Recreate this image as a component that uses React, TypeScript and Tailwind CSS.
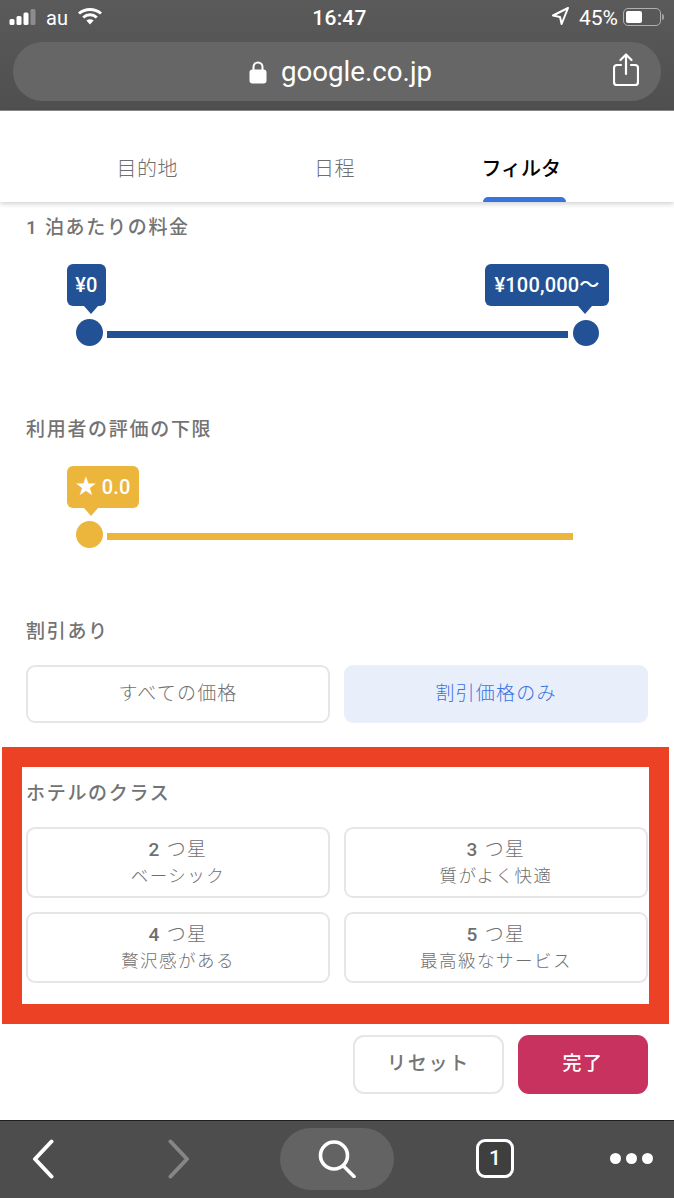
import React from "react";

const jp = "font-['Roboto','Noto_Sans_CJK_JP',sans-serif]";

function Label({ children, className = "" }: { children: React.ReactNode; className?: string }) {
  return (
    <div className={"h-[30px] leading-[30px] text-[19px] font-medium tracking-[1.7px] text-[#737373] " + className}>
      {children}
    </div>
  );
}

function Bubble({ text, color, arrow, width }: { text: React.ReactNode; color: string; arrow: string; width: string }) {
  return (
    <div className={"relative h-[42px] rounded-[6px] flex items-center justify-center text-white text-[20px] font-medium tracking-[0.2px] " + color + " " + width}>
      {text}
      <div className={"absolute top-[42px] w-0 h-0 border-l-[7px] border-r-[7px] border-t-[8px] border-l-transparent border-r-transparent " + arrow} />
    </div>
  );
}

function Card({ digit, title, sub }: { digit: string; title: string; sub: string }) {
  return (
    <div className="h-[71px] rounded-[9px] border-2 border-[#e6e6e6] flex flex-col items-center justify-center text-[#6f6f6f]">
      <div className="text-[19px] leading-[26px] font-light tracking-[1.4px]">
        <span className="font-medium">{digit}</span> {title}
      </div>
      <div className="text-[17.5px] leading-[26px] tracking-[1.5px] font-light">{sub}</div>
    </div>
  );
}

export default function App() {
  return (
    <div className={"w-[674px] h-[1198px] bg-white flex flex-col overflow-hidden " + jp}>
      {/* Browser chrome */}
      <header className="h-[111px] bg-gradient-to-b from-[#5a5a5a] to-[#4f4f4f] flex flex-col text-white border-b border-[#8a8a8a]">
        <div className="h-[42px] flex items-start pt-[6px] pl-[9px] pr-[10px] relative">
          <svg width="28" height="18" viewBox="0 0 28 18" className="mt-[2px]">
            <rect x="0.5" y="11" width="5" height="6" rx="1.5" fill="#fff" />
            <rect x="7.5" y="8" width="5" height="9" rx="1.5" fill="#fff" />
            <rect x="14.5" y="4.5" width="5" height="12.5" rx="1.5" fill="#fff" />
            <rect x="21.5" y="1" width="5" height="16" rx="1.5" fill="#8c8c8c" />
          </svg>
          <span className="ml-[9px] text-[20px] leading-[24px]">au</span>
          <svg width="26" height="18" viewBox="0 0 26 18" className="ml-[9px] mt-[1px]" fill="none" stroke="#fff" strokeWidth="3">
            <path d="M2 6.5C8 1 18 1 24 6.5" />
            <path d="M6.2 10.5c4-3.6 9.6-3.6 13.6 0" />
            <path d="M13 17.5l-3.6-4c2-1.6 5.2-1.6 7.2 0z" fill="#fff" stroke="none" />
          </svg>
          <span className="absolute left-[5px] right-0 top-[6px] text-center text-[21px] leading-[25px] font-medium tracking-[0.2px]">16:47</span>
          <div className="ml-auto flex items-start">
            <svg width="17" height="18" viewBox="0 0 17 18" className="mt-[1px]">
              <path d="M16 1L1 8.5l7 1.4L9.6 17z" fill="none" stroke="#fff" strokeWidth="2" strokeLinejoin="round" />
            </svg>
            <span className="ml-[10px] text-[21px] leading-[24px]">45%</span>
            <div className="ml-[5px] mt-[2px] flex items-center">
              <div className="w-[38px] h-[18px] rounded-[5px] border border-[#b0b0b0] p-[2px]">
                <div className="w-[16px] h-full rounded-[2px] bg-white" />
              </div>
              <div className="w-[2px] h-[6px] rounded-r bg-[#a0a0a0] ml-[1px]" />
            </div>
          </div>
        </div>
        <div className="mx-[13px] h-[59px] pl-[7px] rounded-[30px] bg-[#666666] flex items-center justify-center relative">
          <svg width="18" height="23" viewBox="0 0 18 23" className="mr-[14px] mt-[1px]">
            <path d="M4.5 10V6a4.5 4.5 0 0 1 9 0v4" fill="none" stroke="#fff" strokeWidth="2" />
            <rect x="0.5" y="8.5" width="17" height="14" rx="3" fill="#fff" />
          </svg>
          <span className="text-[27.7px] leading-[34px] mt-[1px]">google.co.jp</span>
          <svg width="26" height="34" viewBox="0 0 26 34" className="absolute right-[22px] top-[11px]" fill="none" stroke="#fff" strokeWidth="2.2" strokeLinecap="round" strokeLinejoin="round">
            <path d="M8 12H4a3 3 0 0 0-3 3v14a3 3 0 0 0 3 3h18a3 3 0 0 0 3-3V15a3 3 0 0 0-3-3h-4" />
            <path d="M13 21V2M7.5 7L13 1.5 18.5 7" />
          </svg>
        </div>
      </header>

      {/* Tabs */}
      <nav className="relative z-10 h-[91px] pl-[53px] pr-[56px] grid grid-cols-3 bg-white shadow-[0_2px_5px_rgba(0,0,0,0.18)]">
        <div className="flex items-center justify-center pt-[24px] text-[20px] text-[#6f6f6f] tracking-[0.5px] font-light">目的地</div>
        <div className="flex items-center justify-center pt-[24px] pr-[2px] text-[20px] text-[#6f6f6f] tracking-[0.5px] font-light">日程</div>
        <div className="relative flex items-center justify-center pt-[24px] pr-[5px] text-[20px] text-black font-medium">
          フィルタ
          <div className="absolute bottom-0 left-[53px] w-[83px] h-[5px] rounded-t-[5px] bg-[#3b73de]" />
        </div>
      </nav>

      {/* Filters */}
      <main className="flex-1 px-[26px] pt-[11px] flex flex-col">
        <Label>1 泊あたりの料金</Label>
        <div className="mt-[21px] pl-[41px] pr-[39px] flex justify-between">
          <Bubble text="¥0" color="bg-[#225295]" arrow="border-t-[#225295] left-[17px]" width="w-[39px]" />
          <Bubble text="¥100,000〜" color="bg-[#225295]" arrow="border-t-[#225295] left-[93px]" width="w-[124px]" />
        </div>
        <div className="mt-[13px] pl-[50px] flex items-center">
          <div className="w-[27px] h-[27px] rounded-full bg-[#225295]" />
          <div className="ml-[4px] w-[461px] h-[7px] mt-[3px] bg-[#225295]" />
          <div className="ml-[5px] w-[26px] h-[26px] rounded-full bg-[#225295]" />
        </div>

        <Label className="mt-[69px]">利用者の評価の下限</Label>
        <div className="mt-[21px] pl-[41px] flex">
          <Bubble
            text={<><span className="text-[21px] mr-[5px]">★</span>0.0</>}
            color="bg-[#ecb53c]"
            arrow="border-t-[#ecb53c] left-[17px]"
            width="w-[72px]"
          />
        </div>
        <div className="mt-[13px] pl-[50px] flex items-center">
          <div className="w-[27px] h-[27px] rounded-full bg-[#ecb53c]" />
          <div className="ml-[4px] w-[466px] h-[7px] mt-[3px] bg-[#ecb53c]" />
        </div>

        <Label className="mt-[69px]">割引あり</Label>
        <div className="mt-[18px] grid grid-cols-2 gap-x-[14px]">
          <div className="h-[58px] rounded-[9px] border-2 border-[#e6e6e6] flex items-center justify-center text-[19px] text-[#6f6f6f] tracking-[1.2px] font-light">すべての価格</div>
          <div className="h-[58px] rounded-[9px] bg-[#e8effb] flex items-center justify-center text-[19px] text-[#3b73de] tracking-[1.2px] font-light">割引価格のみ</div>
        </div>

        <section className="relative mt-[55px]">
          <Label className="translate-y-[1px]">ホテルのクラス</Label>
          <div className="mt-[19px] grid grid-cols-2 gap-x-[14px] gap-y-[14px]">
            <Card digit="2" title="つ星" sub="ベーシック" />
            <Card digit="3" title="つ星" sub="質がよく快適" />
            <Card digit="4" title="つ星" sub="贅沢感がある" />
            <Card digit="5" title="つ星" sub="最高級なサービス" />
          </div>
          <div className="absolute left-[-24px] top-[-31px] w-[667px] h-[277px] border-[20px] border-[#ec4125]" />
        </section>

        <div className="mt-[52px] flex justify-end gap-x-[14px]">
          <div className="w-[151px] h-[59px] rounded-[11px] border-2 border-[#e6e6e6] flex items-center justify-center text-[19px] font-medium tracking-[1.8px] text-[#757575]">リセット</div>
          <div className="w-[130px] h-[59px] rounded-[11px] bg-[#c7325f] flex items-center justify-center text-[19px] font-medium tracking-[1.4px] text-white">完了</div>
        </div>
      </main>

      {/* Bottom toolbar */}
      <footer className="h-[78px] pb-[2px] bg-[#4d4d4d] border-t border-[#1f1f1f] flex items-center pl-[32px]">
        <svg width="22" height="40" viewBox="0 0 22 40" fill="none" stroke="#fff" strokeWidth="4" strokeLinecap="round" strokeLinejoin="round">
          <path d="M19.5 2.5L3 20l16.5 17.5" />
        </svg>
        <svg width="22" height="40" viewBox="0 0 22 40" fill="none" stroke="#868686" strokeWidth="4" strokeLinecap="round" strokeLinejoin="round" className="ml-[114px]">
          <path d="M2.5 2.5L19 20 2.5 37.5" />
        </svg>
        <div className="ml-[90px] w-[114px] h-[62px] rounded-[31px] bg-[#636363] flex items-center justify-center">
          <svg width="38" height="38" viewBox="0 0 38 38" fill="none" stroke="#fff" strokeWidth="3.6" strokeLinecap="round">
            <circle cx="16" cy="15.5" r="13.5" />
            <path d="M25.5 26L36 36.5" />
          </svg>
        </div>
        <div className="ml-[82px] w-[38px] h-[39px] rounded-[9px] border-[3.5px] border-white bg-[#3f3f3f] flex items-center justify-center text-white text-[21px] font-medium">1</div>
        <div className="ml-[96px] flex gap-x-[5px]">
          <div className="w-[11px] h-[11px] rounded-full bg-white" />
          <div className="w-[11px] h-[11px] rounded-full bg-white" />
          <div className="w-[11px] h-[11px] rounded-full bg-white" />
        </div>
      </footer>
    </div>
  );
}
